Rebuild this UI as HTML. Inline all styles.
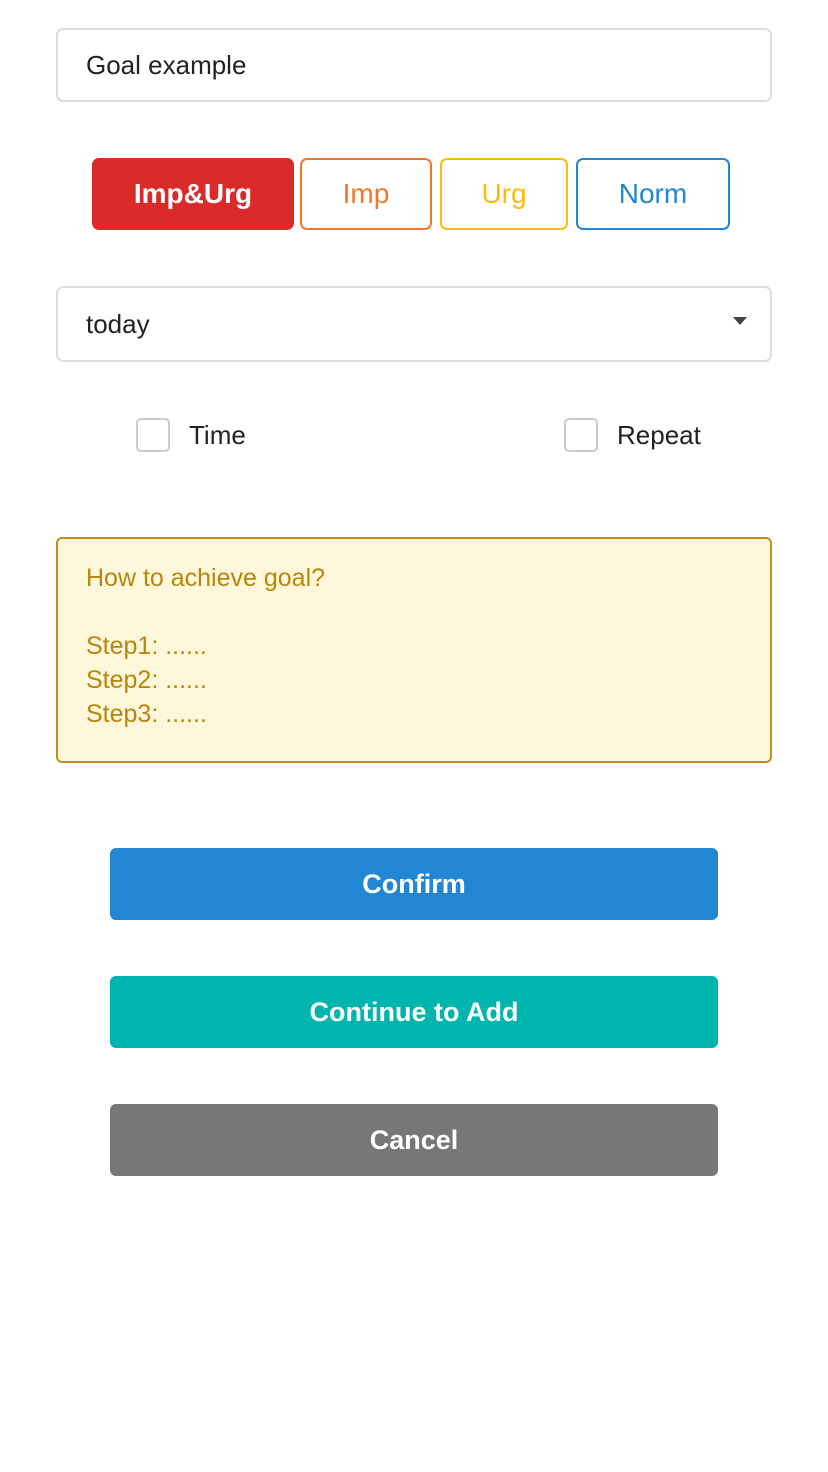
<!DOCTYPE html>
<html><head><style>
*{box-sizing:border-box;margin:0;padding:0}
body{width:828px;height:1472px;background:#fff;font-family:"Liberation Sans",sans-serif;position:relative}
.abs{position:absolute}
.input{left:56px;width:716px;border:2px solid #ddd;border-radius:7px;font-size:26px;color:#222;padding-left:28px;display:flex;align-items:center}
.tag{top:158px;height:72px;border-radius:7px;font-size:28px;display:flex;align-items:center;justify-content:center;border:2px solid}
.cb{width:34px;height:34px;border:2px solid #ccc;border-radius:5px;top:418px}
.lbl{font-size:26px;color:#222;top:420px}
.btn{left:110px;width:608px;height:72px;border-radius:6px;color:#fff;font-weight:bold;font-size:27px;display:flex;align-items:center;justify-content:center}
</style></head><body>
<div class="abs input" style="top:28px;height:74px">Goal example</div>
<div class="abs tag" style="left:92px;width:202px;background:#db2a2a;border-color:#db2a2a;color:#fff;font-weight:bold">Imp&amp;Urg</div>
<div class="abs tag" style="left:300px;width:132px;border-color:#f07828;color:#f07828">Imp</div>
<div class="abs tag" style="left:440px;width:128px;border-color:#fbbc0a;color:#fbbc0a">Urg</div>
<div class="abs tag" style="left:576px;width:154px;border-color:#2386d3;color:#2386d3">Norm</div>
<div class="abs input" style="top:286px;height:76px">today</div>
<div class="abs" style="left:733px;top:317px;width:0;height:0;border-left:7px solid transparent;border-right:7px solid transparent;border-top:8px solid #444"></div>
<div class="abs cb" style="left:136px"></div><div class="abs lbl" style="left:189px">Time</div>
<div class="abs cb" style="left:564px"></div><div class="abs lbl" style="left:617px">Repeat</div>
<div class="abs" style="left:56px;top:537px;width:716px;height:226px;background:#fef7da;border:2px solid #bf8f1e;border-radius:6px;color:#b8860b;font-size:25px;line-height:34px;padding:22px 0 0 28px">How to achieve goal?<br><br>Step1: ......<br>Step2: ......<br>Step3: ......</div>
<div class="abs btn" style="top:848px;background:#2386d3">Confirm</div>
<div class="abs btn" style="top:976px;background:#00b5ad">Continue to Add</div>
<div class="abs btn" style="top:1104px;background:#777">Cancel</div>
</body></html>
